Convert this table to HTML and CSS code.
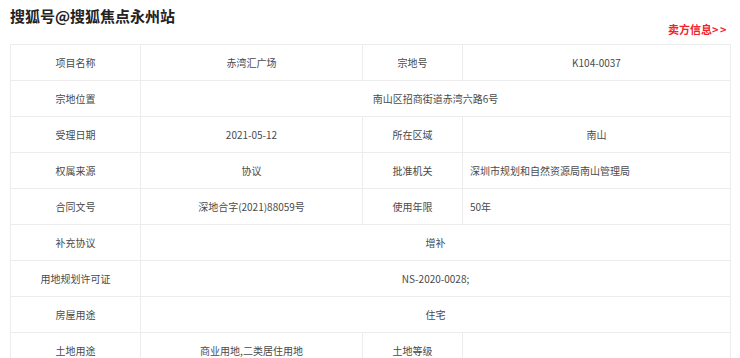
FILE: index.html
```html
<!DOCTYPE html>
<html lang="zh-CN">
<head>
<meta charset="utf-8">
<link rel="stylesheet" href="styles.css">
</head>
<body>
<div class="page">
  <header class="header">
    <div class="title">搜狐号@搜狐焦点永州站</div>
    <a class="more">卖方信息<span class="arrows">&gt;&gt;</span></a>
  </header>
  <table class="info">
    <colgroup>
      <col class="c1"><col class="c2"><col class="c3"><col class="c4">
    </colgroup>
    <tr><td>项目名称</td><td>赤湾汇广场</td><td>宗地号</td><td>K104-0037</td></tr>
    <tr><td>宗地位置</td><td colspan="3">南山区招商街道赤湾六路6号</td></tr>
    <tr><td>受理日期</td><td>2021-05-12</td><td>所在区域</td><td>南山</td></tr>
    <tr><td>权属来源</td><td>协议</td><td>批准机关</td><td class="left">深圳市规划和自然资源局南山管理局</td></tr>
    <tr><td>合同文号</td><td>深地合字(2021)88059号</td><td>使用年限</td><td class="left">50年</td></tr>
    <tr><td>补充协议</td><td colspan="3">增补</td></tr>
    <tr><td>用地规划许可证</td><td colspan="3">NS-2020-0028;</td></tr>
    <tr><td>房屋用途</td><td colspan="3">住宅</td></tr>
    <tr><td>土地用途</td><td>商业用地,二类居住用地</td><td>土地等级</td><td></td></tr>
  </table>
</div>
</body>
</html>
```

FILE: styles.css
```css
html, body {
  margin: 0;
  padding: 0;
  background: #fff;
}
body {
  font-family: "Noto Sans CJK SC", "Noto Sans", sans-serif;
  color: #4a4a4a;
}
.page {
  padding: 0 10px;
  width: 720px;
}
.header {
  display: flex;
  justify-content: space-between;
  align-items: flex-start;
  height: 44px;
}
.title {
  margin-top: 6px;
  font-size: 15px;
  line-height: 20px;
  font-weight: 700;
  color: #222;
}
.more {
  margin-top: 22px;
  margin-right: 2px;
  font-size: 11px;
  line-height: 14px;
  font-weight: 700;
  color: #f5222d;
}
.arrows {
  letter-spacing: 1.5px;
}
.info {
  width: 720px;
  table-layout: fixed;
  border-collapse: collapse;
  font-size: 10px;
}
.c1 { width: 130px; }
.c2 { width: 222px; }
.c3 { width: 100px; }
.c4 { width: 268px; }
.info td {
  border: 1px solid #ececec;
  height: 35px;
  padding: 0 7px;
  text-align: center;
  vertical-align: middle;
  line-height: 14px;
}
.info td.left {
  text-align: left;
}
```
